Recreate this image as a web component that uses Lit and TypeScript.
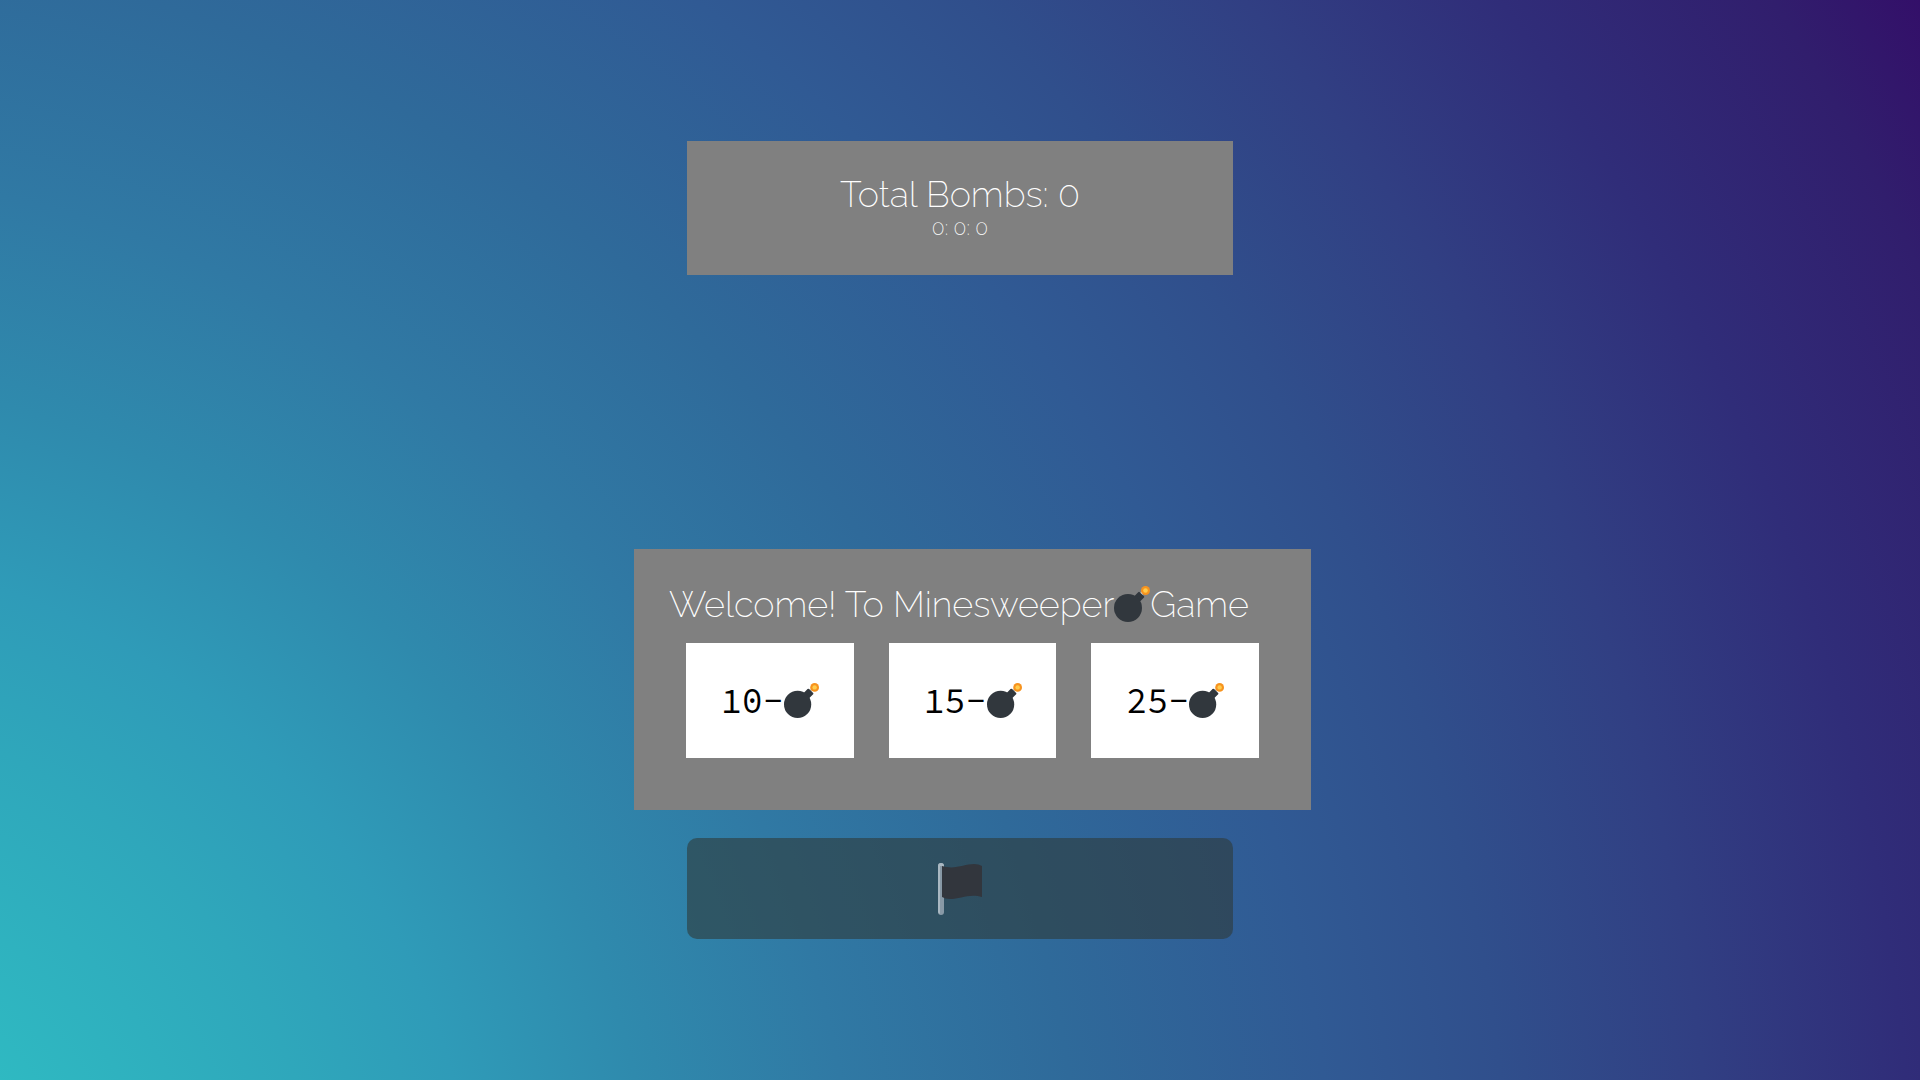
import { LitElement, html, css, svg } from "lit";
import { customElement, state } from "lit/decorators.js";

const bomb = html`<svg class="bomb" viewBox="0 0 36 36" aria-hidden="true">
  ${svg`<path d="M26 9 30.500 5" stroke="#CCD6DD" stroke-width="3" />
  <path d="M20 10.500 24.200 6.200Q25 5.400 25.800 6.200L30 10.200Q30.600 11 30 11.600L25 16.500Z" fill="#31373D" />
  <circle cx="14" cy="22" r="14" fill="#31373D" />
  <circle cx="31.500" cy="4.500" r="4.500" fill="#F7931E" />
  <circle cx="31.500" cy="4.500" r="2.300" fill="#FFCC4D" />`}
</svg>`;

const flag = html`<svg class="flag" viewBox="0 0 44 52" aria-hidden="true">
  <path d="M0 3a3 3 0 0 1 6 0v46a3 3 0 0 1-6 0z" fill="#8899A6" />
  <path d="M0 3a3 3 0 0 1 6 0h-4v48a3 3 0 0 1-2-2z" fill="#AAB8C2" />
  <path d="M4 3c13 4 22-2 32-2q5 0 8 2v31c-12-4-22 2-32 2q-5 0-8-2z" fill="#32363D" />
</svg>`;

@customElement("app-root")
export class AppRoot extends LitElement {
  @state() private totalBombs = 0;
  @state() private elapsed = [0, 0, 0];

  static styles = css`
    :host {
      display: block;
      font-family: Raleway, Lato, sans-serif;
      font-weight: 200;
      color: #fff;
    }
    .page {
      box-sizing: border-box;
      min-height: 100vh;
      padding: 141px 24px;
      display: flex;
      flex-direction: column;
      align-items: center;
      background: radial-gradient(
        circle farthest-corner at -13% 118%,
        #2fbac2 12%,
        #2fa7bb 23%,
        #2f9bb8 29%,
        #2f8aad 36%,
        #3079a4 44%,
        #2f6a9a 53%,
        #305a94 63%,
        #304f8c 70%,
        #313f83 78%,
        #302d79 86%,
        #311e6d 95%,
        #330f69 100%
      );
    }
    .status {
      box-sizing: border-box;
      width: 100%;
      max-width: 546px;
      height: 134px;
      padding-top: 31px;
      background: gray;
      text-align: center;
    }
    h1, h2, p { margin: 0; font-weight: inherit; }
    h1, h2 { font-size: 36px; line-height: 44px; }
    p { font-size: 21px; line-height: 24px; }
    .welcome {
      box-sizing: border-box;
      width: 100%;
      max-width: 677px;
      margin: 274px 0 28px 25px;
      padding: 33px 35px 52px;
      background: gray;
    }
    .welcome h2 { white-space: nowrap; }
    .levels {
      display: grid;
      grid-template-columns: repeat(3, 1fr);
      gap: 35px;
      padding: 17px 17px 0;
    }
    .level {
      height: 115px;
      padding: 0;
      border: 0;
      background: #fff;
      color: #000;
      font: 35px/40px "Source Code Pro", "Liberation Mono", monospace;
      cursor: pointer;
    }
    .bomb { width: 36px; height: 36px; vertical-align: -5px; }
    .level .bomb { width: 35px; height: 35px; }
    .marker {
      display: flex;
      width: 100%;
      max-width: 546px;
      height: 101px;
      padding: 0;
      border: 0;
      border-radius: 10px;
      align-items: center;
      justify-content: center;
      background: rgba(47, 58, 56, 0.6);
      cursor: pointer;
    }
    .flag { width: 44px; height: 52px; }
  `;

  private choose(count: number) {
    this.totalBombs = count;
  }

  render() {
    return html`
      <main class="page">
        <header class="status">
          <h1>Total Bombs: ${this.totalBombs}</h1>
          <p>${this.elapsed.join(": ")}</p>
        </header>
        <section class="welcome">
          <h2>Welcome! To Minesweeper${bomb}Game</h2>
          <div class="levels">
            ${[10, 15, 25].map(
              (n) => html`<button class="level" aria-label="${n} bombs" @click=${() => this.choose(n)}>${n}-${bomb}</button>`
            )}
          </div>
        </section>
        <button class="marker" aria-label="Flag">${flag}</button>
      </main>
    `;
  }
}
